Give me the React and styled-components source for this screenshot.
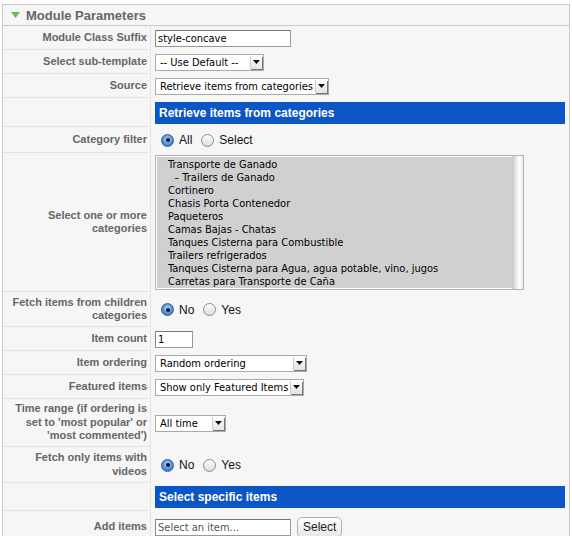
import React from "react";
import styled, { createGlobalStyle } from "styled-components";

const GlobalStyle = createGlobalStyle`
  html, body {
    margin: 0;
    padding: 0;
    background: #fff;
  }
  body {
    font-family: "Liberation Sans", Arial, sans-serif;
  }
`;

const categories = [
  "Transporte de Ganado",
  "\u00a0\u00a0\u2013 Trailers de Ganado",
  "Cortinero",
  "Chasis Porta Contenedor",
  "Paqueteros",
  "Camas Bajas - Chatas",
  "Tanques Cisterna para Combustible",
  "Trailers refrigerados",
  "Tanques Cisterna para Agua, agua potable, vino, jugos",
  "Carretas para Transporte de Caña",
];

const SelectField = ({ width, children }) => (
  <SelectBox w={width}>
    <span>{children}</span>
    <Arrow>
      <svg width="7" height="4" viewBox="0 0 7 4">
        <path d="M0 0h7L3.5 4z" fill="#111" />
      </svg>
    </Arrow>
  </SelectBox>
);

const RadioGroup = ({ options, value }) => (
  <Radios>
    {options.map((o) => (
      <RadioLabel key={o}>
        <Radio checked={o === value} />
        {o}
      </RadioLabel>
    ))}
  </Radios>
);

const App = () => {
  return (
    <>
      <GlobalStyle />
      <Panel>
        <Title>
          <svg width="9" height="6" viewBox="0 0 9 6">
            <path d="M0 0h9L4.5 6z" fill="#6dba4a" />
          </svg>
          Module Parameters
        </Title>

        <Row h={24}>
          <Key>Module Class Suffix</Key>
          <Value>
            <TextInput w={136}>style-concave</TextInput>
          </Value>
        </Row>
        <Row h={24}>
          <Key>Select sub-template</Key>
          <Value>
            <SelectField width={109}>-- Use Default --</SelectField>
          </Value>
        </Row>
        <Row h={24}>
          <Key>Source</Key>
          <Value>
            <SelectField width={174}>Retrieve items from categories</SelectField>
          </Value>
        </Row>
        <Row h={29}>
          <Key />
          <Value>
            <Bar>Retrieve items from categories</Bar>
          </Value>
        </Row>
        <Row h={26}>
          <Key>Category filter</Key>
          <Value>
            <RadioGroup options={["All", "Select"]} value="All" />
          </Value>
        </Row>
        <Row h={139}>
          <Key>Select one or more categories</Key>
          <Value>
            <ListBox>
              <ListItems>
                {categories.map((c) => (
                  <li key={c}>{c}</li>
                ))}
              </ListItems>
              <Scroll />
            </ListBox>
          </Value>
        </Row>
        <Row h={35}>
          <Key>Fetch items from children categories</Key>
          <Value>
            <RadioGroup options={["No", "Yes"]} value="No" />
          </Value>
        </Row>
        <Row h={24}>
          <Key>Item count</Key>
          <Value>
            <TextInput w={38}>1</TextInput>
          </Value>
        </Row>
        <Row h={24}>
          <Key>Item ordering</Key>
          <Value>
            <SelectField width={152}>Random ordering</SelectField>
          </Value>
        </Row>
        <Row h={24}>
          <Key>Featured items</Key>
          <Value>
            <SelectField width={149}>Show only Featured Items</SelectField>
          </Value>
        </Row>
        <Row h={48}>
          <Key>Time range (if ordering is set to 'most popular' or 'most commented')</Key>
          <Value>
            <SelectField width={71}>All time</SelectField>
          </Value>
        </Row>
        <Row h={36}>
          <Key>Fetch only items with videos</Key>
          <Value>
            <RadioGroup options={["No", "Yes"]} value="No" />
          </Value>
        </Row>
        <Row h={28}>
          <Key />
          <Value>
            <Bar>Select specific items</Bar>
          </Value>
        </Row>
        <Row h={32}>
          <Key>Add items</Key>
          <Value>
            <TextInput w={136} placeholder>Select an item...</TextInput>
            <Button>Select</Button>
          </Value>
        </Row>
      </Panel>
    </>
  );
};

const Panel = styled.div`
  margin: 4px 0 0 2px;
  width: 568px;
  box-sizing: border-box;
  border: 1px solid #c9c9c9;
  border-bottom: none;
  background: #f6f6f6;
`;

const Title = styled.div`
  display: flex;
  align-items: center;
  gap: 6px;
  height: 20px;
  padding-left: 8px;
  border-bottom: 1px solid #c9c9c9;
  font-weight: bold;
  font-size: 13px;
  color: #666;
`;

const Row = styled.div`
  display: flex;
  height: ${(p) => p.h}px;
`;

const Key = styled.div`
  width: 148px;
  flex-shrink: 0;
  box-sizing: border-box;
  border-right: 1px solid #e4e4e4;
  border-bottom: 1px solid #e4e4e4;
  padding: 0 3px 0 6px;
  display: flex;
  align-items: center;
  justify-content: flex-end;
  text-align: right;
  font-weight: bold;
  font-size: 11px;
  line-height: 13.5px;
  color: #666;
`;

const Value = styled.div`
  flex: 1;
  display: flex;
  align-items: center;
  gap: 6px;
  padding: 0 4px 0 4px;
`;

const TextInput = styled.div`
  width: ${(p) => p.w}px;
  height: 17px;
  box-sizing: border-box;
  border: 1px solid #999;
  border-top-color: #777;
  border-left-color: #888;
  background: #fff;
  padding-left: 2px;
  display: flex;
  align-items: center;
  font-family: "DejaVu Sans Condensed", "DejaVu Sans", sans-serif;
  font-size: 11px;
  color: ${(p) => (p.placeholder ? "#555" : "#000")};
`;

const SelectBox = styled.div`
  width: ${(p) => p.w}px;
  height: 17px;
  box-sizing: border-box;
  border: 1px solid #aaa;
  background: #fff;
  padding-left: 4px;
  display: flex;
  align-items: center;
  font-family: "DejaVu Sans Condensed", "DejaVu Sans", sans-serif;
  font-size: 11px;
  color: #000;
  white-space: nowrap;
`;

const Arrow = styled.span`
  margin-left: auto;
  width: 12px;
  height: 13px;
  box-sizing: border-box;
  border-left: 1px solid #ccc;
  background: linear-gradient(#fff, #e3e3e3);
  box-shadow: 1px 1px 0 #777;
  margin-right: 1px;
  display: flex;
  align-items: center;
  justify-content: center;
`;

const Bar = styled.div`
  flex: 1;
  height: 22px;
  background: #0b55c4;
  color: #fff;
  font-weight: bold;
  font-size: 12px;
  display: flex;
  align-items: center;
  padding-left: 4px;
`;

const Radios = styled.div`
  display: flex;
  align-items: center;
  gap: 9px;
  margin-left: 6px;
`;

const RadioLabel = styled.label`
  display: flex;
  align-items: center;
  gap: 5px;
  font-size: 12px;
  color: #111;
`;

const Radio = styled.span`
  width: 13px;
  height: 13px;
  box-sizing: border-box;
  border-radius: 50%;
  border: 1px solid ${(p) => (p.checked ? "#2f5f9e" : "#8a8a8a")};
  background: ${(p) =>
    p.checked
      ? "radial-gradient(circle at 50% 40%, #bfe0ff 0%, #4d8fdc 55%, #2c68b8 100%)"
      : "linear-gradient(#ffffff, #dcdcdc)"};
  display: flex;
  align-items: center;
  justify-content: center;
  &::after {
    content: "";
    width: 4px;
    height: 4px;
    border-radius: 50%;
    background: #111;
    display: ${(p) => (p.checked ? "block" : "none")};
  }
`;

const ListBox = styled.div`
  width: 369px;
  height: 135px;
  box-sizing: border-box;
  border: 1px solid #b4b4b4;
  display: flex;
  background: #fff;
`;

const ListItems = styled.ul`
  flex: 1;
  margin: 0;
  padding: 1px 0 0 11px;
  list-style: none;
  background: #d0d0d0;
  border: 1px solid #fff;
  border-right: none;
  font-family: "DejaVu Sans Condensed", "DejaVu Sans", sans-serif;
  font-size: 11px;
  line-height: 13px;
  color: #000;
  li {
    white-space: pre;
  }
`;

const Scroll = styled.div`
  width: 11px;
  background: linear-gradient(90deg, #c8c8c8, #f4f4f4 50%, #fff 70%, #e8e8e8);
`;

const Button = styled.button`
  height: 21px;
  padding: 0 5px;
  border: 1px solid #b0b0b0;
  border-radius: 5px;
  background: linear-gradient(#ffffff, #e6e6e6);
  font-family: "Liberation Sans", Arial, sans-serif;
  font-size: 12px;
  color: #222;
`;

export default App;
